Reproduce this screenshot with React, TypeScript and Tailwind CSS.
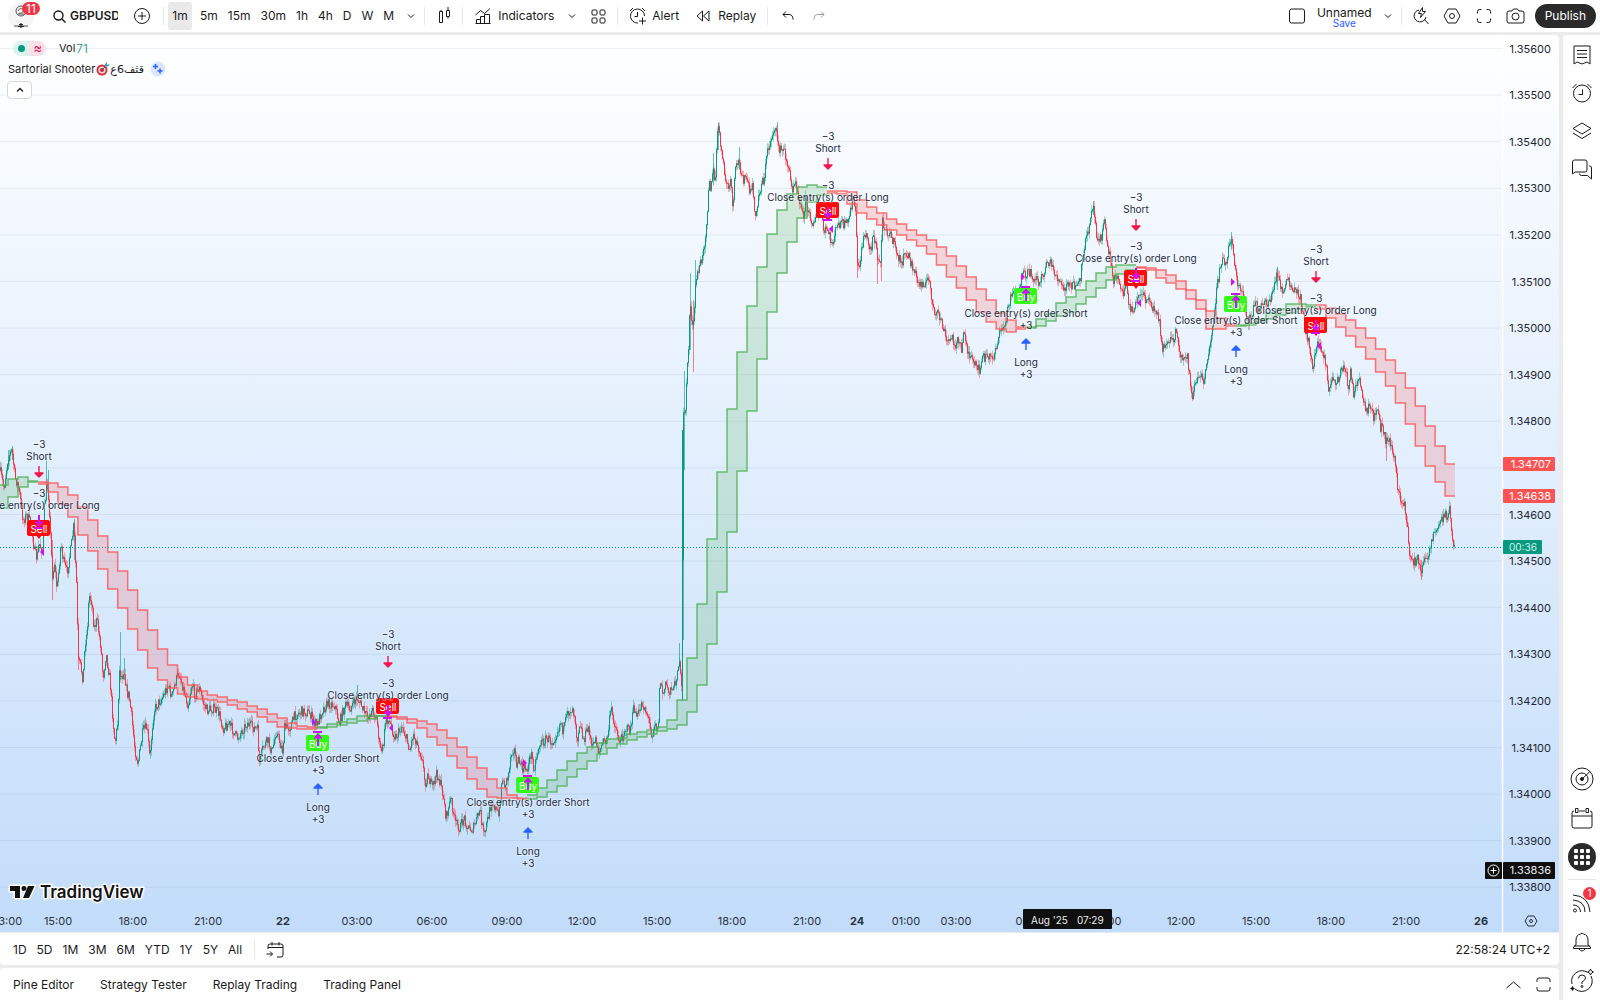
import { ReactNode } from "react";

type Side = "up" | "down";

interface Ribbon {
  side: Side;
  start: number; // x of the first step
  end: number;
  upper: number[];
  lower: number[];
}

interface Signal {
  kind: "buy" | "sell";
  x: number;
  bar: number; // y of the bar the entry arrow points at
  box: number; // top of the Buy / Sell label
  tri: [number, number];
}

const RED = "#f23645";
const GREEN = "#089981";

// price path, x then y
const PRICE = [
  0, 470, 4, 488, 8, 457, 12, 450, 15, 477, 18, 485, 21, 503, 23, 520, 27, 515, 32, 527, 34, 550, 37, 558, 39, 543, 43, 552,
  44, 513, 47, 483, 49, 500, 51, 547, 53, 583, 54, 557, 57, 590, 59, 567, 61, 542, 63, 560, 67, 572, 71, 547, 74, 523,
  75, 553, 77, 593, 78, 660, 81, 667, 83, 680, 85, 643, 87, 633, 89, 595, 92, 602, 94, 628, 97, 620, 101, 647, 103, 678,
  106, 653, 110, 680, 113, 720, 115, 743, 118, 720, 119, 670, 122, 677, 124, 668, 127, 693, 129, 695, 132, 720, 135, 750,
  138, 763, 140, 750, 143, 730, 147, 727, 150, 760, 152, 730, 154, 710, 158, 703, 162, 698, 168, 685, 172, 697, 175, 683,
  179, 672, 183, 687, 188, 705, 192, 683, 195, 695, 199, 687, 203, 702, 207, 710, 213, 708, 219, 713, 223, 728, 229, 723,
  237, 738, 247, 723, 258, 730, 259, 765, 263, 747, 268, 740, 272, 753, 276, 730, 283, 752, 284, 728, 290, 727, 295, 715,
  302, 711, 310, 713, 314, 722, 317, 725, 322, 710, 328, 703, 335, 705, 339, 723, 345, 705, 350, 708, 357, 697, 362, 707,
  367, 717, 373, 710, 377, 720, 380, 750, 383, 748, 386, 717, 390, 723, 395, 737, 399, 732, 402, 725, 410, 750, 413, 733,
  417, 743, 422, 757, 425, 783, 428, 775, 432, 788, 437, 773, 443, 793, 446, 818, 451, 798, 455, 822, 460, 828, 464, 817,
  468, 828, 473, 829, 480, 810, 484, 837, 487, 822, 492, 800, 499, 817, 502, 777, 504, 785, 508, 777, 511, 753, 514, 747,
  517, 767, 519, 760, 523, 770, 528, 767, 531, 752, 534, 768, 539, 745, 547, 738, 552, 742, 557, 732, 561, 720, 563, 732,
  568, 712, 572, 708, 575, 715, 577, 740, 580, 720, 583, 740, 589, 727, 592, 750, 595, 737, 599, 752, 603, 742, 607, 740,
  611, 708, 615, 725, 620, 743, 625, 728, 630, 730, 634, 707, 637, 718, 642, 702, 647, 713, 652, 735, 655, 720, 658, 732,
  660, 678, 663, 695, 666, 683, 669, 693, 672, 683, 673, 693, 677, 673, 679, 660, 682, 693, 683, 430, 684, 400, 685, 420,
  687, 370, 688, 363, 690, 300, 693, 333, 696, 280, 699, 267, 703, 257, 707, 217, 709, 177, 711, 190, 713, 167, 715, 187,
  717, 137, 719, 127, 722, 157, 725, 177, 728, 188, 731, 183, 733, 210, 735, 173, 738, 160, 742, 173, 744, 180, 747, 177,
  750, 197, 752, 183, 756, 220, 758, 200, 762, 180, 764, 180, 767, 153, 770, 143, 774, 127, 777, 137, 780, 150, 784, 150,
  788, 165, 792, 190, 795, 177, 799, 197, 803, 217, 806, 197, 808, 213, 813, 222, 817, 217, 820, 210, 824, 233, 827, 228,
  832, 245, 835, 232, 840, 222, 845, 225, 848, 223, 851, 207, 853, 197, 856, 213, 857, 267, 860, 263, 864, 233, 867, 237,
  871, 250, 873, 233, 876, 247, 878, 262, 881, 260, 882, 220, 887, 230, 892, 238, 897, 253, 901, 263, 907, 253, 911, 263,
  915, 273, 919, 285, 923, 282, 930, 282, 933, 307, 935, 318, 938, 313, 942, 323, 947, 343, 952, 337, 955, 345, 957, 338,
  962, 352, 964, 327, 968, 353, 973, 363, 979, 370, 983, 357, 988, 357, 993, 357, 997, 343, 1001, 330, 1006, 323, 1008, 307,
  1012, 290, 1017, 293, 1020, 290, 1023, 275, 1030, 273, 1035, 278, 1040, 282, 1048, 260, 1053, 268, 1059, 282, 1064, 290,
  1070, 283, 1075, 287, 1080, 282, 1084, 247, 1088, 233, 1091, 210, 1093, 203, 1097, 237, 1102, 235, 1104, 220, 1107, 243,
  1110, 257, 1113, 280, 1118, 273, 1123, 297, 1126, 277, 1128, 303, 1134, 313, 1137, 295, 1142, 295, 1146, 300, 1149, 295,
  1153, 313, 1155, 305, 1159, 317, 1161, 340, 1163, 350, 1168, 338, 1173, 342, 1176, 330, 1179, 353, 1183, 360, 1187, 353,
  1189, 370, 1192, 398, 1195, 383, 1200, 377, 1204, 380, 1208, 360, 1212, 327, 1215, 303, 1218, 280, 1222, 260, 1226, 265,
  1229, 245, 1232, 235, 1234, 260, 1237, 283, 1242, 293, 1245, 310, 1248, 323, 1253, 310, 1256, 303, 1260, 313, 1264, 300,
  1268, 303, 1273, 293, 1277, 273, 1280, 283, 1283, 293, 1288, 280, 1293, 293, 1297, 290, 1302, 303, 1305, 327, 1308, 340,
  1313, 367, 1317, 343, 1322, 347, 1326, 363, 1329, 393, 1333, 377, 1337, 383, 1343, 365, 1346, 373, 1348, 387, 1351, 370,
  1353, 393, 1359, 380, 1363, 400, 1366, 413, 1369, 408, 1374, 417, 1377, 407, 1380, 427, 1383, 427, 1386, 443, 1389, 437,
  1392, 450, 1395, 460, 1397, 483, 1401, 503, 1404, 503, 1407, 523, 1409, 553, 1412, 558, 1414, 562, 1418, 558, 1421, 573,
  1424, 563, 1429, 550, 1434, 532, 1438, 528, 1442, 517, 1446, 515, 1450, 510, 1452, 540, 1455, 548,
];

// long single wicks: x, top, bottom, side
const SPIKES: [number, number, number, Side][] = [
  [8, 450, 470, "up"],
  [12, 446, 460, "up"],
  [46, 457, 500, "up"],
  [48, 470, 500, "up"],
  [52, 540, 600, "down"],
  [74, 519, 560, "up"],
  [120, 632, 680, "up"],
  [124, 658, 680, "up"],
  [78, 640, 670, "down"],
  [357, 685, 700, "up"],
  [679, 643, 665, "up"],
  [683, 427, 640, "up"],
  [684, 371, 470, "up"],
  [690, 273, 350, "up"],
  [693, 300, 372, "down"],
  [695, 260, 300, "up"],
  [713, 153, 185, "up"],
  [718, 123, 150, "up"],
  [739, 147, 170, "up"],
  [777, 122, 140, "up"],
  [857, 240, 278, "down"],
  [877, 250, 284, "down"],
  [881, 240, 281, "down"],
  [1093, 201, 215, "up"],
  [1231, 232, 250, "up"],
  [1277, 267, 290, "up"],
  [1386, 440, 461, "down"],
  [1421, 560, 580, "down"],
];

const RIBBONS: Ribbon[] = [
  { side: "up", start: -2, end: 38, upper: [485, 479, 477, 481], lower: [508, 497, 487, 482] },
  {
    side: "down",
    start: 38,
    end: 317,
    upper: [482, 483, 487, 495, 507, 520, 536, 552, 571, 590, 610, 630, 649, 665, 677, 685, 691, 695, 697, 700, 702, 706, 709, 714, 718, 723, 726, 727],
    lower: [484, 492, 504, 517, 535, 551, 569, 589, 608, 629, 650, 668, 680, 688, 694, 697, 699, 700, 702, 705, 709, 712, 717, 722, 727, 728, 729, 729],
  },
  { side: "up", start: 317, end: 387, upper: [727, 724, 722, 719, 716, 716, 716], lower: [728, 727, 725, 723, 721, 719, 716] },
  {
    side: "down",
    start: 387,
    end: 527,
    upper: [716, 717, 719, 721, 724, 730, 738, 747, 757, 768, 779, 788, 795, 798],
    lower: [717, 719, 723, 728, 737, 745, 756, 768, 779, 789, 797, 798, 798, 799],
  },
  {
    side: "up",
    start: 527,
    end: 827,
    upper: [795, 788, 780, 770, 761, 753, 747, 743, 739, 738, 734, 732, 730, 727, 720, 700, 658, 604, 539, 472, 409, 352, 306, 267, 234, 210, 194, 187, 185, 187],
    lower: [799, 797, 792, 786, 777, 769, 761, 754, 748, 744, 740, 737, 734, 731, 729, 725, 712, 685, 644, 592, 532, 471, 411, 359, 312, 273, 242, 218, 202, 195],
  },
  {
    side: "down",
    start: 827,
    end: 1026,
    upper: [191, 191, 192, 200, 207, 213, 219, 224, 230, 235, 240, 247, 256, 266, 277, 289, 300, 313, 320, 327],
    lower: [193, 194, 204, 213, 219, 225, 230, 235, 240, 246, 254, 265, 277, 288, 300, 312, 322, 329, 332, 329],
  },
  {
    side: "up",
    start: 1026,
    end: 1136,
    upper: [327, 319, 314, 303, 297, 290, 281, 273, 267, 265, 265],
    lower: [328, 326, 321, 316, 312, 304, 297, 288, 280, 274, 270],
  },
  {
    side: "down",
    start: 1136,
    end: 1236,
    upper: [267, 268, 270, 275, 281, 290, 300, 311, 318, 324],
    lower: [268, 270, 278, 283, 289, 299, 309, 329, 329, 326],
  },
  { side: "up", start: 1236, end: 1316, upper: [325, 323, 319, 313, 309, 304, 304, 305], lower: [326, 325, 322, 319, 315, 313, 309, 307] },
  {
    side: "down",
    start: 1316,
    end: 1455,
    upper: [305, 308, 314, 320, 328, 338, 349, 360, 373, 388, 406, 426, 446, 464],
    lower: [309, 318, 327, 336, 347, 359, 372, 386, 403, 424, 446, 466, 482, 496],
  },
];

const SIGNALS: Signal[] = [
  { kind: "sell", x: 39, bar: 528, box: 520, tri: [42, 552] },
  { kind: "buy", x: 318, bar: 732, box: 735, tri: [314, 722] },
  { kind: "sell", x: 388, bar: 718, box: 698, tri: [391, 728] },
  { kind: "buy", x: 528, bar: 776, box: 777, tri: [525, 763] },
  { kind: "sell", x: 828, bar: 220, box: 202, tri: [831, 229] },
  { kind: "buy", x: 1026, bar: 287, box: 288, tri: [1023, 277] },
  { kind: "sell", x: 1136, bar: 281, box: 270, tri: [1139, 303] },
  { kind: "buy", x: 1236, bar: 294, box: 296, tri: [1233, 282] },
  { kind: "sell", x: 1316, bar: 333, box: 317, tri: [1319, 346] },
];

const PRICE_TICKS = Array.from({ length: 19 }, (_, i) => ({
  y: 48.5 + i * 46.6,
  label: (1.356 - i * 0.001).toFixed(5),
}));

const TIME_TICKS: [number, string][] = [
  [8, "13:00"],
  [58, "15:00"],
  [133, "18:00"],
  [208, "21:00"],
  [283, "22"],
  [357, "03:00"],
  [432, "06:00"],
  [507, "09:00"],
  [582, "12:00"],
  [657, "15:00"],
  [732, "18:00"],
  [807, "21:00"],
  [857, "24"],
  [906, "01:00"],
  [956, "03:00"],
  [1031, "06:00"],
  [1106, "09:00"],
  [1181, "12:00"],
  [1256, "15:00"],
  [1331, "18:00"],
  [1406, "21:00"],
  [1481, "26"],
];

function priceAt(x: number) {
  for (let i = 0; i < PRICE.length - 2; i += 2) {
    if (x <= PRICE[i + 2]) {
      const t = (x - PRICE[i]) / (PRICE[i + 2] - PRICE[i]);
      return PRICE[i + 1] + t * (PRICE[i + 3] - PRICE[i + 1]);
    }
  }
  return PRICE[PRICE.length - 1];
}

// one-minute candles are thinner than a pixel, so bodies and wicks are plain strokes
function buildCandles() {
  let seed = 7;
  const rnd = () => {
    seed = (seed * 16807) % 2147483647;
    return seed / 2147483647;
  };
  const out = { upBody: "", downBody: "", upWick: "", downWick: "" };
  let prev = PRICE[1];
  for (let x = 0.5; x < 1455; x += 1) {
    const next = priceAt(x) + (rnd() - 0.5) * 10;
    const top = Math.min(prev, next);
    const bottom = Math.max(prev, next) + 0.6;
    const body = `M${x.toFixed(1)} ${top.toFixed(1)}V${bottom.toFixed(1)}`;
    const wick = `M${x.toFixed(1)} ${(top - rnd() * 6).toFixed(1)}V${(bottom + rnd() * 6).toFixed(1)}`;
    if (next < prev) {
      out.upBody += body;
      out.upWick += wick;
    } else {
      out.downBody += body;
      out.downWick += wick;
    }
    prev = next;
  }
  return out;
}

const candles = buildCandles();

function stepLine(ys: number[], start: number, end: number) {
  const w = (end - start) / ys.length;
  return ys.map((y, i) => `${i ? "L" : "M"}${start + i * w} ${y}H${start + (i + 1) * w}`).join("");
}

function stepFill(r: Ribbon) {
  const w = (r.end - r.start) / r.upper.length;
  return r.upper.map((y, i) => `M${r.start + i * w} ${y}h${w}V${r.lower[i]}h${-w}Z`).join("");
}

function Label({ x, y, children }: { x: number; y: number; children: ReactNode }) {
  return (
    <text x={x} y={y + 4} fontSize={10} textAnchor="middle" fill="#1c2b45" stroke="#ffffff" strokeOpacity={0.35} strokeWidth={2} paintOrder="stroke">
      {children}
    </text>
  );
}

function SignalMark({ s }: { s: Signal }) {
  const { x, bar, box } = s;
  const sell = s.kind === "sell";
  const [tx, ty] = s.tri;
  return (
    <g>
      <rect x={x - 12} y={box} width={23} height={16} rx={2} fill={sell ? "#ff0a0a" : "#33fa14"} />
      <path
        d={sell ? `M${x - 3} ${box + 15}h6l-3 4Z` : `M${x - 3} ${box + 1}h6l-3 -4Z`}
        fill={sell ? "#ff0a0a" : "#33fa14"}
      />
      <text x={x} y={box + 13} fontSize={10} textAnchor="middle" fill="#ffffff">
        {sell ? "Sell" : "Buy"}
      </text>
      {sell ? (
        <g fill="#cc10fa" stroke="#cc10fa" strokeWidth={2}>
          <path d={`M${x - 5} ${bar}h9M${x} ${bar - 13}v9`} />
          <path d={`M${x - 4} ${bar - 6}h8l-4 4Z`} strokeWidth={1} />
          <path d={`M${tx + 2} ${ty - 4}v8l-4 -4Z`} stroke="none" />
        </g>
      ) : (
        <g fill="#cc10fa" stroke="#cc10fa" strokeWidth={2}>
          <path d={`M${x - 5} ${bar}h9M${x} ${bar + 14}v-10`} />
          <path d={`M${x - 4} ${bar + 6}h8l-4 -4Z`} strokeWidth={1} />
          <path d={`M${tx - 2} ${ty - 4}v8l4 -4Z`} stroke="none" />
        </g>
      )}
      {sell ? (
        <>
          <Label x={x} y={bar - 84}>−3</Label>
          <Label x={x} y={bar - 72}>Short</Label>
          <path d={`M${x} ${bar - 62}v8M${x - 4} ${bar - 55}h8l-4 4Z`} stroke="#f5164a" strokeWidth={1.4} fill="#f5164a" strokeLinejoin="round" />
          <Label x={x} y={bar - 35}>−3</Label>
          <Label x={x} y={bar - 23}>Close entry(s) order Long</Label>
        </>
      ) : (
        <>
          <Label x={x} y={bar + 26}>Close entry(s) order Short</Label>
          <Label x={x} y={bar + 38}>+3</Label>
          <path d={`M${x} ${bar + 63}v-8M${x - 4} ${bar + 56}h8l-4 -4Z`} stroke="#2962ff" strokeWidth={1.4} fill="#2962ff" strokeLinejoin="round" />
          <Label x={x} y={bar + 75}>Long</Label>
          <Label x={x} y={bar + 87}>+3</Label>
        </>
      )}
    </g>
  );
}

function Chart() {
  return (
    <svg className="h-full w-full" viewBox="0 35 1559 897" preserveAspectRatio="xMinYMin meet" fontSize={11} fontFamily="Inter, sans-serif">
      {PRICE_TICKS.map(t => (
        <path key={t.label} d={`M0 ${t.y}H1502`} stroke="#4a6a90" strokeOpacity={0.1} />
      ))}

      {/* candles */}
      <g fill="none" strokeWidth={1}>
        <path d={candles.upWick} stroke={GREEN} strokeOpacity={0.4} />
        <path d={candles.downWick} stroke={RED} strokeOpacity={0.4} />
        {SPIKES.map(([x, a, b, side]) => (
          <path key={x} d={`M${x + 0.5} ${a}V${b}`} stroke={side === "up" ? GREEN : RED} strokeOpacity={0.6} />
        ))}
        <path d={candles.upBody} stroke={GREEN} />
        <path d={candles.downBody} stroke={RED} />
        <path d="M682.5 430V700" stroke={GREEN} />
      </g>

      {/* trend ribbons */}
      {RIBBONS.map(r => (
        <g key={r.start} fill="none" stroke={r.side === "up" ? "#4caf50" : "#ff5252"} strokeOpacity={0.8} strokeWidth={1.5}>
          <path d={stepFill(r)} fill={r.side === "up" ? "#4caf50" : "#ff5252"} fillOpacity={0.2} stroke="none" />
          <path d={stepLine(r.upper, r.start, r.end)} />
          <path d={stepLine(r.lower, r.start, r.end)} />
        </g>
      ))}

      <path d="M0 547.5H1502" stroke={GREEN} strokeDasharray="1 2" />

      {SIGNALS.map(s => (
        <SignalMark key={s.x} s={s} />
      ))}

      {/* watermark logo */}
      <g fill="#131313" stroke="#ffffff" strokeWidth={3} strokeLinejoin="round" paintOrder="stroke">
        <path d="M10 886h10v12h-5v-7h-5ZM28 886h6.500l-5.500 12h-6ZM24 886a2.500 2.500 0 1 1 -0.010 5a2.500 2.500 0 1 1 0.010 -5Z" />
        <text x={40} y={898} fontSize={17} fontWeight={600}>TradingView</text>
      </g>

      {/* time axis */}
      {TIME_TICKS.map(([x, label]) => (
        <text key={x} x={x} y={925} textAnchor="middle" fill="#2a3340" fontWeight={label.length === 2 ? 700 : 400}>
          {label}
        </text>
      ))}
      <rect x={1023} y={909} width={89} height={20} rx={1} fill="#0f0f0f" />
      <text x={1031} y={924} fontSize={10} fill="#ededed">Aug '25</text>
      <text x={1077} y={924} fontSize={10} fill="#ededed">07:29</text>

      {/* price axis */}
      <path d="M1502.500 35V932" stroke="#ffffff" strokeWidth={1.5} />
      {PRICE_TICKS.filter(t => t.label !== "1.34700").map(t => (
        <text key={t.label} x={1551} y={t.y + 4} textAnchor="end" fill="#1f2733">
          {t.label}
        </text>
      ))}
      <rect x={1503} y={457} width={52} height={14} rx={1} fill="#ff5252" />
      <text x={1551} y={468} textAnchor="end" fill="#ffffff">1.34707</text>
      <rect x={1503} y={489} width={52} height={14} rx={1} fill="#ff5252" />
      <text x={1551} y={500} textAnchor="end" fill="#ffffff">1.34638</text>
      <rect x={1503} y={540} width={39} height={14} rx={1} fill={GREEN} />
      <text x={1509} y={551} fontSize={10} fill="#d5f3ee">00:36</text>
      <rect x={1485} y={862} width={17} height={17} rx={1} fill="#0f0f0f" />
      <g fill="none" stroke="#ffffff">
        <circle cx={1493.5} cy={870.5} r={5.500} />
        <path d="M1490.500 870.500h6M1493.500 867.500v6" />
      </g>
      <rect x={1503} y={862} width={52} height={17} rx={1} fill="#0f0f0f" />
      <text x={1551} y={874} textAnchor="end" fill="#ededed">1.33836</text>
      <g fill="none" stroke="#2a3340">
        <path d="M1528 916h6l3 5l-3 5h-6l-3 -5Z" />
        <circle cx={1531} cy={921} r={1.500} />
      </g>
    </svg>
  );
}

function Icon({ w = 18, h = 18, className = "", children }: { w?: number; h?: number; className?: string; children: ReactNode }) {
  return (
    <svg
      width={w}
      height={h}
      viewBox={`0 0 ${w} ${h}`}
      fill="none"
      stroke="currentColor"
      strokeWidth={1}
      className={`shrink-0 ${className}`}
      aria-hidden="true"
    >
      {children}
    </svg>
  );
}

const Chevron = () => (
  <Icon w={8} h={6}>
    <path d="M1 1.500l3 3l3 -3" />
  </Icon>
);

const Divider = () => <div className="h-[18px] w-px shrink-0 bg-[#e6e6e6]" />;

const AlarmPaths = () => (
  <>
    <circle cx={10} cy={10.5} r={8.5} />
    <path d="M10.500 6.500v5h-4M0.500 5l4 -4M15.500 1l4 4" />
  </>
);

function TopBar() {
  const intervals = ["5m", "15m", "30m", "1h", "4h", "D", "W", "M"];
  return (
    <header className="flex h-8 shrink-0 items-center bg-white pl-2 pr-1">
      <button className="relative h-8 w-9" aria-label="Account, 11 notifications">
        <svg width="26" height="28" viewBox="0 0 26 28" fill="none" stroke="#555" aria-hidden="true">
          <circle cx="13" cy="14" r="13" fill="#f5f5f5" stroke="none" />
          <circle cx="13" cy="9" r="5" />
          <path d="M10 9c1 -3 4 -3 5 -1s-2 4 -4 3M10 12h6" />
          <path d="M6 24h14" stroke="#555" />
          <path d="M10 24.500h6M11 22.500h4M13 21v5" stroke="#222" strokeWidth="1.200" />
        </svg>
        <span className="absolute left-[14px] top-[2px] rounded-full bg-[#f23645] px-1 text-[12px] leading-[13px] text-white">11</span>
      </button>

      <button className="ml-[9px] flex items-center gap-1">
        <Icon w={13} h={13}>
          <circle cx={5.500} cy={5.500} r={4.500} strokeWidth={1.400} />
          <path d="M9 9l3.500 3.500" strokeWidth={1.400} />
        </Icon>
        <span className="w-12 overflow-hidden text-left text-[12px] font-semibold">GBPUSD</span>
      </button>
      <button className="ml-[15px]" aria-label="Compare symbols">
        <Icon>
          <circle cx={9} cy={9} r={7.500} />
          <path d="M9 5v8M5 9h8" />
        </Icon>
      </button>
      <div className="ml-3 mr-1"><Divider /></div>

      <button className="mr-[3px] h-7 w-6 rounded bg-[#e9e9e9]">1m</button>
      {intervals.map(i => (
        <button key={i} className="px-[5px]">{i}</button>
      ))}
      <button className="ml-2" aria-label="More intervals"><Chevron /></button>
      <div className="ml-[9px] mr-[13px]"><Divider /></div>

      <button aria-label="Bar style">
        <Icon w={14} h={18}>
          <path d="M1.500 4.500h3v11h-3ZM8.500 3.500h3v6h-3ZM3 3v1.500M10 0v3.500M10 9.500v2" />
        </Icon>
      </button>
      <div className="ml-[10px] mr-3"><Divider /></div>

      <button className="flex items-center gap-[7px]">
        <Icon w={16} h={18}>
          <path d="M0.500 8l5 -4.500l4 3l5.500 -5M1.500 16.500v-4h4v4ZM5.500 16.500v-7h4v7ZM9.500 16.500v-9h5v9ZM0.500 16.500h15" />
        </Icon>
        Indicators
      </button>
      <button className="ml-[14px]" aria-label="Favourite indicators"><Chevron /></button>
      <button className="ml-[15px]" aria-label="Templates">
        <Icon w={15} h={15}>
          <rect x={1} y={1} width={5} height={5} rx={1} />
          <rect x={9} y={1} width={5} height={5} rx={1} />
          <rect x={1} y={9} width={5} height={5} rx={1} />
          <rect x={9} y={9} width={5} height={5} rx={1} />
        </Icon>
      </button>
      <div className="mx-[11px]"><Divider /></div>

      <button className="flex items-center gap-[5px]">
        <Icon w={18} h={18}>
          <path d="M15.500 9a7 7 0 1 0 -6.500 7M8.500 5v4.500h-3M1 4l3 -3M13 1l3 3M13.500 10.500v7M10 14h7" />
        </Icon>
        Alert
      </button>
      <button className="ml-[17px] flex items-center gap-2">
        <Icon w={14} h={14}>
          <path d="M6.500 2v10l-5.500 -5ZM13 2v10l-5.500 -5Z" />
        </Icon>
        Replay
      </button>
      <div className="mx-[11px]"><Divider /></div>
      <button className="ml-[3px]" aria-label="Undo">
        <Icon w={12} h={10}>
          <path d="M4 0.500l-3 3l3 3M1 3.500h6q4 0 4 5" />
        </Icon>
      </button>
      <button className="ml-[19px] text-[#9a9a9a]" aria-label="Redo">
        <Icon w={12} h={10}>
          <path d="M8 0.500l3 3l-3 3M11 3.500h-6q-4 0 -4 5" />
        </Icon>
      </button>

      <div className="ml-auto flex items-center">
        <button aria-label="Layout">
          <Icon w={16} h={16}>
            <rect x={0.500} y={1} width={15} height={14} rx={2} />
          </Icon>
        </button>
        <button className="ml-3 flex flex-col items-center pt-px">
          <span className="text-[12px] leading-[13px]">Unnamed</span>
          <span className="text-[10px] leading-[9px] text-[#2962ff]">Save</span>
        </button>
        <button className="ml-3" aria-label="Manage layouts"><Chevron /></button>
        <div className="ml-[9px] mr-[10px]"><Divider /></div>
        <button aria-label="Quick search">
          <Icon w={18} h={18}>
            <path d="M7 3a6 6 0 1 0 7 7M12 12l4.500 5M10.500 0.500l-4 6h3l-1 4l5 -6h-3Z" />
          </Icon>
        </button>
        <button className="ml-[13px]" aria-label="Settings">
          <Icon w={18} h={18}>
            <path d="M5 2h8l4 7l-4 7h-8l-4 -7Z" />
            <circle cx={9} cy={9} r={2.500} />
          </Icon>
        </button>
        <button className="ml-[15px]" aria-label="Fullscreen">
          <Icon w={16} h={16}>
            <path d="M1.500 5.500v-2q0 -2 2 -2h2M10.500 1.500h2q2 0 2 2v2M14.500 10.500v2q0 2 -2 2h-2M5.500 14.500h-2q-2 0 -2 -2v-2" />
          </Icon>
        </button>
        <button className="ml-[14px]" aria-label="Snapshot">
          <Icon w={19} h={16}>
            <path d="M3 3h3l1.500 -2h4l1.500 2h3q2 0 2 2v8q0 2 -2 2h-13q-2 0 -2 -2v-8q0 -2 2 -2Z" />
            <circle cx={9.500} cy={8.500} r={3.500} />
          </Icon>
        </button>
        <button className="ml-[10px] h-6 rounded-full bg-[#2a2a2a] px-[10px] text-white">Publish</button>
      </div>
    </header>
  );
}

function Legend() {
  return (
    <div className="absolute left-0 top-0 flex flex-col items-start pl-2 pt-[6px] text-[11px] leading-[15px]">
      <div className="ml-[5px] flex items-center">
        <span className="flex h-[15px] w-[33px] overflow-hidden rounded-full">
          <span className="flex flex-1 items-center justify-center bg-[#dff1ee]">
            <span className="h-[7px] w-[7px] rounded-full bg-[#089981]" />
          </span>
          <span className="flex-1 bg-[#fcdfe8] text-center text-[13px] leading-[14px] text-[#e0195a]">≈</span>
        </span>
        <span className="ml-[13px]">Vol</span>
        <span className="ml-px text-[12px] text-[#4aa593]">71</span>
      </div>
      <div className="mt-[5px] flex items-center">
        <span>Sartorial Shooter</span>
        <svg className="ml-px" width="14" height="14" viewBox="0 0 14 14" aria-hidden="true">
          <circle cx="6" cy="8" r="5.500" fill="#d32f3c" />
          <circle cx="6" cy="8" r="3.600" fill="#f4dcdc" />
          <circle cx="6" cy="8" r="2" fill="#c62834" />
          <path d="M6 8l5 -5" stroke="#455" />
          <path d="M9 4l0 -2l2 -2v2.500h3l-2 2h-3Z" fill="#3aa5c8" />
        </svg>
        <span dir="rtl" className="font-['DejaVu_Sans','Noto_Sans',sans-serif]">قثف6ع</span>
        <svg className="ml-[6px]" width="16" height="16" viewBox="0 0 16 16" aria-hidden="true">
          <circle cx="8" cy="8" r="7.500" fill="#dde5fd" />
          <path d="M5.500 3v5M3 5.500h5M10 7.500v5M7.500 10h5" stroke="#2962ff" strokeWidth="1.500" />
        </svg>
      </div>
      <button className="-ml-px mt-1 flex h-[18px] w-[25px] items-center justify-center rounded border border-[#d6d6d6] bg-white" aria-label="Collapse legend">
        <Icon w={8} h={6}>
          <path d="M1 4.500l3 -3l3 3" strokeWidth={1.300} />
        </Icon>
      </button>
    </div>
  );
}

function SideBar() {
  const topItem = "flex h-[38px] w-full items-center justify-center";
  const item = "relative flex h-[39px] w-full shrink-0 items-center justify-center";
  return (
    <aside className="flex w-[37px] shrink-0 flex-col items-center rounded-tl bg-white">
      <div className="w-full pt-px">
        <button className={topItem} aria-label="Watchlist">
          <Icon w={20} h={20}>
            <path d="M2 1h16v18l-3 -2l-5 2l-5 -2l-3 2ZM5 5.500h10M5 9h10M5 12.500h10" />
          </Icon>
        </button>
        <button className={topItem} aria-label="Alerts">
          <Icon w={20} h={20}>
            <AlarmPaths />
          </Icon>
        </button>
        <button className={topItem} aria-label="Object tree">
          <Icon w={20} h={20}>
            <path d="M10 2l9 5.500l-9 5.500l-9 -5.500ZM1 12l9 5.500l9 -5.500" />
          </Icon>
        </button>
        <button className={topItem} aria-label="Chats">
          <Icon w={22} h={22}>
            <path d="M1.500 16v-12q0 -2 2 -2h10.500q2 0 2 2v8q0 2 -2 2h-10ZM18 8h1q1.500 0 1.500 2v11l-4 -3.500h-6q-2 0 -2 -2" />
          </Icon>
        </button>
      </div>

      <div className="flex-1" />

      <button className={item} aria-label="Screeners">
        <Icon w={24} h={24}>
          <circle cx={12} cy={12} r={11} />
          <circle cx={12} cy={12} r={6} />
          <circle cx={12} cy={12} r={1.500} fill="currentColor" />
          <path d="M12 12l8 -7.500" />
        </Icon>
      </button>
      <button className={item} aria-label="Calendar">
        <Icon w={22} h={22}>
          <path d="M3 4q-2 0 -2 2v13q0 2 2 2h16q2 0 2 -2v-13q0 -2 -2 -2M8 4h6M1 9h20M4.500 1.500h2.500v4h-2.500ZM15 1.500h2.500v4h-2.500Z" />
        </Icon>
      </button>
      <button className={item} aria-label="Products">
        <svg width="28" height="28" viewBox="0 0 28 28" fill="#fff" aria-hidden="true">
          <circle cx="14" cy="14" r="14" fill="#2a2a2a" />
          {[6, 12, 18].map(y => [6, 12, 18].map(x => <rect key={`${x}-${y}`} x={x} y={y} width="4" height="4" rx="1" />))}
        </svg>
      </button>
      <div className="my-[3px] h-px w-7 bg-[#e6e6e6]" />
      <button className={item} aria-label="News feed, 1 new">
        <Icon w={20} h={20}>
          <circle cx={3} cy={17.500} r={1.500} />
          <path d="M1 12q7 0 7.500 7M1 7q12 1 12 12M1 2q16 1 17 17" />
        </Icon>
        <span className="absolute left-5 top-1 h-[13px] w-[13px] rounded-full bg-[#f23645] text-center text-[10px] leading-[13px] text-white">1</span>
      </button>
      <button className={item} aria-label="Notifications">
        <Icon w={20} h={20}>
          <path d="M1.500 16.500v-1.500l2.500 -2v-5q0 -5 4.500 -6q1.500 -2 3 0q4.500 1 4.500 6v5l2.500 2v1.500ZM2 14h16M7 17q3 4 6 0" />
        </Icon>
      </button>
      <button className={item} aria-label="Help">
        <Icon w={26} h={26}>
          <path d="M18 4a10.500 10.500 0 0 0 -15 12M6 21a10.500 10.500 0 0 0 16 -13M9.500 10.500q0 -3.500 3.500 -3.500t3.500 3q0 2 -3.500 4v2" />
          <circle cx={13} cy={18.500} r={1} />
          <path d="M21.500 1q0.500 2.500 3 3q-2.500 0.500 -3 3q-0.500 -2.500 -3 -3q2.500 -0.500 3 -3Z" />
          <path d="M3.500 18l1 1.500l1.500 1l-1.500 1l-1 1.500l-1 -1.500l-1.500 -1l1.500 -1Z" fill="currentColor" stroke="none" />
        </Icon>
      </button>
    </aside>
  );
}

export default function App() {
  const ranges = ["1D", "5D", "1M", "3M", "6M", "YTD", "1Y", "5Y", "All"];
  const tabs = ["Pine Editor", "Strategy Tester", "Replay Trading", "Trading Panel"];
  return (
    <div className="flex h-screen flex-col gap-[3px] overflow-hidden bg-[#ebebeb] font-['Inter',sans-serif] text-[12px] text-[#1a1a1a]">
      <TopBar />
      <div className="flex min-h-0 flex-1 gap-1">
        <main className="flex min-w-0 flex-1 flex-col">
          <section className="relative min-h-0 flex-1 overflow-hidden rounded-tr bg-linear-to-b from-white to-[#c2dcfa]">
            <Chart />
            <Legend />
          </section>

          <div className="mt-px flex h-8 shrink-0 items-center rounded-b bg-white pl-[13px] pr-[9px] pt-px">
            <div className="flex gap-[10px]">
              {ranges.map(r => (
                <button key={r}>{r}</button>
              ))}
            </div>
            <div className="ml-3 mr-[11px]"><Divider /></div>
            <button aria-label="Go to date">
              <Icon w={18} h={16}>
                <path d="M2 7v-3q0 -2 2 -2h11q2 0 2 2v9q0 2 -2 2h-4M2 5.500h15M6 0v3.500M13 0v3.500M0.500 12h6M4 9.500l2.500 2.500l-2.500 2.500" />
              </Icon>
            </button>
            <button className="ml-auto">22:58:24 UTC+2</button>
          </div>

          <div className="mt-[3px] flex h-8 shrink-0 items-center gap-[26px] rounded-t bg-white pl-[13px] pr-2 pt-px">
            {tabs.map(t => (
              <button key={t}>{t}</button>
            ))}
            <div className="ml-auto flex items-center gap-[15px]">
              <button aria-label="Expand panel">
                <Icon w={15} h={9}>
                  <path d="M0.500 8l7 -6l7 6" />
                </Icon>
              </button>
              <button aria-label="Maximize panel">
                <Icon w={15} h={15}>
                  <path d="M1 5v-2q0 -2 2 -2h9q2 0 2 2v2M1 10v2q0 2 2 2h9q2 0 2 -2v-2" />
                </Icon>
              </button>
            </div>
          </div>
        </main>
        <SideBar />
      </div>
    </div>
  );
}
